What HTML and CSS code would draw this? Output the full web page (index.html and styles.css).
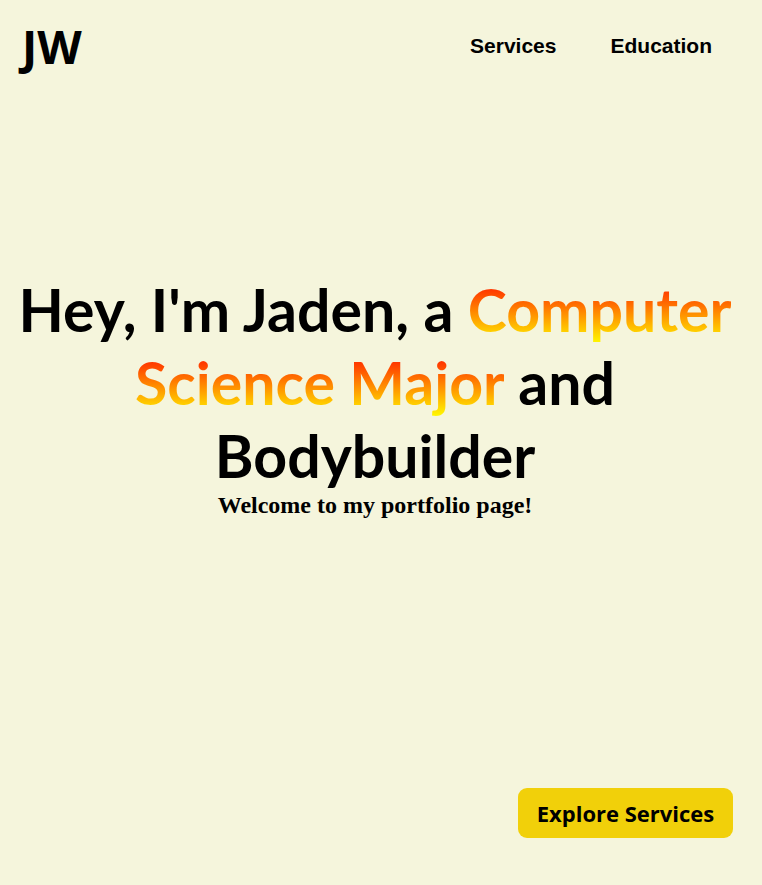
FILE: index.html
```html
<!DOCTYPE html>
<html lang="en">
<head>
<meta charset="utf-8">
<title>Jaden W</title>
<link rel="stylesheet" href="styles.css">
</head>
<body>
<div class="page">
  <header class="topbar">
    <div class="logo">JW</div>
    <nav class="nav">
      <a class="nav-link" href="#services">Services</a>
      <a class="nav-link" href="#education">Education</a>
    </nav>
  </header>
  <main class="hero">
    <h1 class="hero-title">Hey, I'm Jaden, a <span class="grad">Computer Science Major</span> and Bodybuilder</h1>
    <h3 class="hero-sub">Welcome to my portfolio page!</h3>
  </main>
  <div class="cta-row">
    <a class="cta" href="#services">Explore Services</a>
  </div>
</div>
</body>
</html>
```
FILE: styles.css
```css
html, body {
  margin: 0;
  padding: 0;
}
body {
  background: #f5f5dc;
  color: #000;
  font-family: "Open Sans", "Noto Sans", sans-serif;
}
.page {
  min-height: 885px;
  display: flex;
  flex-direction: column;
}
.topbar {
  display: flex;
  justify-content: space-between;
  align-items: flex-start;
  padding: 16px 50px 0 22px;
}
.logo {
  font-size: 46px;
  font-weight: 700;
  line-height: 60px;
}
.nav {
  display: flex;
  gap: 54px;
  padding-top: 18px;
}
.nav-link {
  font-family: "Liberation Sans", Arial, sans-serif;
  font-weight: 700;
  font-size: 21px;
  color: #000;
  text-decoration: none;
}
.hero {
  text-align: center;
  padding: 197px 16px 0 4px;
}
.hero-title {
  margin: 0;
  font-family: Lato, "Open Sans", sans-serif;
  font-size: 59px;
  font-weight: 700;
  line-height: 73px;
}
.grad {
  background: linear-gradient(to bottom, #ff0000, #ffff00);
  -webkit-background-clip: text;
  background-clip: text;
  color: transparent;
}
.hero-sub {
  margin: 0;
  font-family: "Liberation Serif", "Times New Roman", serif;
  font-size: 24px;
  font-weight: 700;
  line-height: 26px;
}
.cta-row {
  margin-top: auto;
  display: flex;
  justify-content: flex-end;
  padding: 0 29px 47px 0;
}
.cta {
  display: inline-block;
  background: #f1d00a;
  color: #000;
  text-decoration: none;
  font-weight: 700;
  font-size: 22px;
  line-height: 50px;
  width: 215px;
  text-align: center;
  border-radius: 9px;
}
```
